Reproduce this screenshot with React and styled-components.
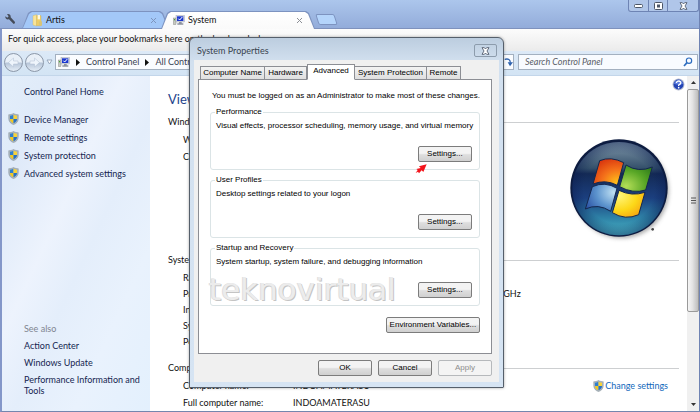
import React from "react";
import styled, { createGlobalStyle, css } from "styled-components";

const GlobalStyle = createGlobalStyle`
  * { box-sizing: border-box; }
  html, body { margin: 0; padding: 0; }
  body { font-family: Lato, "Open Sans", sans-serif; font-size: 9px; line-height: 12px; color: #111; overflow: hidden; }
  button, input { font: inherit; color: inherit; margin: 0; padding: 0; border: 0; background: none; }
  a { text-decoration: none; color: inherit; }
  svg { display: block; flex: none; }
`;

const BrowserWindow = styled.div`
  position: relative;
  display: flex;
  flex-direction: column;
  height: 100vh;
  background: #7f93c4;
  border-left: 2px solid #8497c9;
  border-right: 1px solid #6f83b3;
  border-bottom: 1px solid #7486ae;
`;

/* ---------- browser chrome ---------- */
const TitleBar = styled.header`
  display: flex;
  align-items: flex-end;
  height: 29px;
  padding-left: 4px;
  margin-left: -2px;
  background: linear-gradient(#acc6ec, #93acda);
  border-bottom: 1px solid #7f92bd;
`;
const WrenchButton = styled.button`
  width: 14px;
  height: 18px;
  margin-right: 4px;
`;
const TabStrip = styled.nav`
  display: flex;
  align-items: flex-end;
  flex: 1;
  margin-bottom: -1px;
`;
const BrowserTab = styled.div`
  position: relative;
  z-index: ${(p) => (p.$active ? 2 : 1)};
  display: flex;
  align-items: center;
  width: ${(p) => (p.$active ? "154px" : "147px")};
  height: 18px;
  margin-left: ${(p) => (p.$active ? "-8px" : "0")};
  padding: 0 10px 0 ${(p) => (p.$active ? "12px" : "10px")};
  &::before, &::after {
    content: "";
    position: absolute;
    z-index: -1;
    inset: 0;
    background: #7d93c0;
    clip-path: polygon(0 100%, 6px 2px, 9px 0, calc(100% - 9px) 0, calc(100% - 6px) 2px, 100% 100%);
  }
  &::after {
    inset: 1px 1px ${(p) => (p.$active ? "0" : "1px")};
    background: ${(p) => (p.$active ? "linear-gradient(#fff, #fafafa)" : "#a3c8f8")};
  }
`;
const TabLabel = styled.button`
  display: flex;
  align-items: center;
  gap: 3px;
  flex: 1;
  color: #111;
`;
const TabClose = styled.button`
  width: 9px;
  height: 9px;
`;
const NewTab = styled.button`
  width: 19px;
  height: 11px;
  margin: 0 0 4px 2px;
  border: 1px solid #7d93c0;
  border-radius: 2px;
  background: #b4d4fb;
  transform: skewX(18deg);
`;
const WindowControls = styled.div`
  display: grid;
  grid-template-columns: 19px 19px 31px;
  align-self: flex-start;
  height: 12px;
  border: 1px solid #6e84b4;
  border-top: 0;
  border-radius: 0 0 3px 3px;
  background: #b0c6e9;
`;
const ControlButton = styled.button`
  display: grid;
  place-items: center;
  & + & { border-left: 1px solid #6e84b4; }
`;
const BookmarkBar = styled.div`
  flex: none;
  height: 22px;
  padding: 4px 6px;
  background: linear-gradient(#fcfcfc, #ebebeb);
`;
const AddressRow = styled.div`
  display: flex;
  align-items: center;
  flex: none;
  gap: 2px;
  height: 25px;
  padding: 0 1px 2px 2px;
  background: linear-gradient(#dce9f7, #d3e4f4);
  border-bottom: 1px solid #c3d6ea;
`;
const RoundButton = styled.button`
  width: 19px;
  height: 19px;
  border: 1px solid #8b97a8;
  border-radius: 50%;
  background: linear-gradient(#e9f0f8 48%, #b6c5d8 52%, #e3ecf6);
  display: grid;
  place-items: center;
`;
const AddressBox = styled.div`
  display: flex;
  align-items: center;
  flex: 1;
  gap: 6px;
  height: 16px;
  margin: 0 2px 0 0;
  padding-left: 2px;
  border: 1px solid #a3b0c0;
  background: #fafcff;
  color: #3a4252;
`;
const Spacer = styled.span`flex: 1;`;
const SearchBox = styled.label`
  display: flex;
  align-items: center;
  width: 180px;
  height: 16px;
  padding: 0 4px 0 6px;
  border: 1px solid #a3b0c0;
  background: #f8fbff;
`;
const SearchInput = styled.input`
  flex: 1;
  min-width: 0;
  outline: 0;
  &::placeholder { color: #5b5f68; font-style: italic; opacity: 1; }
`;

/* ---------- control panel ---------- */
const Panel = styled.main`
  display: grid;
  grid-template-columns: 148px 1fr 12px;
  flex: 1;
  min-height: 0;
  background: #fff;
`;
const Sidebar = styled.aside`
  display: flex;
  flex-direction: column;
  justify-content: space-between;
  padding: 10px 6px 15px;
  background: linear-gradient(115deg, #e3eefa 0%, #dfeaf9 18%, #edf3fd 40%, #e4eefb 55%, #e9f2fd 75%, #e3f0fd 100%);
  color: #151f50;
`;
const LinkList = styled.ul`
  display: grid;
  gap: ${(p) => p.$gap};
  list-style: none;
  margin: 0;
  padding: 0;
`;
const HomeLink = styled.a`
  display: block;
  margin: 0 0 15px 16px;
`;
const SideLink = styled.a`
  display: flex;
  align-items: center;
  gap: 5px;
  line-height: 11px;
`;
const SeeAlso = styled.section`margin: 0 -2px 0 16px;`;
const Muted = styled.div`
  margin-bottom: 5px;
  color: #7f8590;
`;
const Content = styled.article`
  overflow: hidden;
  padding: 0 8px 0 18px;
`;
const HelpRow = styled.div`
  display: flex;
  justify-content: flex-end;
  height: 15px;
  margin-right: -6px;
  padding-top: 2px;
`;
const PageTitle = styled.h1`
  margin: 0 0 9px;
  font-size: 13px;
  line-height: 16px;
  font-weight: 400;
  color: #23438c;
`;
const SectionTitle = styled.h2`
  display: flex;
  align-items: center;
  gap: 6px;
  margin: 0;
  font-size: 9px;
  font-weight: 400;
  &::after { content: ""; flex: 1; border-top: 1px solid #cdcfd1; }
`;
const Section = styled.section`
  display: flex;
  justify-content: space-between;
  height: ${(p) => p.$height};
  padding-left: 15px;
`;
const Specs = styled.dl`
  display: grid;
  grid-template-columns: 110px auto;
  align-content: start;
  row-gap: ${(p) => p.$gap || "5px"};
  margin: 6px 0 0;
  white-space: nowrap;
  dt, dd { margin: 0; }
`;
const Lines = styled.div`
  display: grid;
  align-content: start;
  gap: 5px;
  padding-top: 6px;
`;
const LogoSlot = styled.div`padding: 10px 6px 0 0;`;
const ChangeLink = styled.a`
  display: flex;
  align-items: center;
  align-self: flex-start;
  gap: 1px;
  margin: 6px 11px 0 0;
  color: #1168bb;
`;
const ScrollBar = styled.div`
  display: grid;
  grid-template-rows: 13px 223px 1fr 13px;
  background: #f0f0f0;
`;
const ScrollButton = styled.button`
  display: grid;
  place-items: center;
`;
const Thumb = styled.div`
  display: grid;
  place-items: center;
  border: 1px solid #9a9a9a;
  border-radius: 2px;
  background: linear-gradient(90deg, #f6f6f6, #e3e3e3 45%, #bdbdbd);
`;
const ScrollTrack = styled.div``;

/* ---------- dialog ---------- */
const dialogFont = css`
  font-family: "Liberation Sans", Arial, sans-serif;
  font-size: 8px;
  line-height: 12px;
  color: #000;
`;
const Dialog = styled.section`
  position: absolute;
  z-index: 10;
  top: 37px;
  left: 187px;
  width: 315px;
  padding: 0 4px 5px;
  border: 1px solid #555f6b;
  border-radius: 6px 6px 1px 1px;
  background: linear-gradient(#bccddf, #d2e0ef 24px, #d6e4f3);
  box-shadow: 0 0 3px rgba(0, 0, 0, 0.35);
`;
const DialogTitle = styled.div`
  display: flex;
  align-items: center;
  justify-content: space-between;
  height: 22px;
  padding: 3px 2px 0 3px;
  color: #39434f;
`;
const DialogClose = styled.button`
  display: grid;
  place-items: center;
  width: 23px;
  height: 13px;
  border: 1px solid #8d9cac;
  border-radius: 2px;
`;
const DialogBody = styled.div`
  ${dialogFont}
  padding: 4px 7px 6px 4px;
  background: #f0f0f0;
`;
const TabList = styled.div`
  display: grid;
  grid-template-columns: 65px 42px 48px 72px 34px;
  align-items: end;
  margin-bottom: -1px;
  padding-left: 2px;
`;
const DialogTab = styled.button`
  height: ${(p) => (p.$active ? "16px" : "14px")};
  padding-bottom: ${(p) => (p.$active ? "2px" : "0")};
  border: 1px solid #8c8e94;
  border-left-width: ${(p) => (p.$first || p.$active ? "1px" : "0")};
  border-bottom-color: ${(p) => (p.$active ? "#fff" : "#8c8e94")};
  background: ${(p) => (p.$active ? "#fff" : "linear-gradient(#f3f3f3, #dfdfdf)")};
  white-space: nowrap;
`;
const TabPanel = styled.div`
  display: grid;
  gap: 4px;
  padding: 10px 12px 20px 11px;
  border: 1px solid #8c8e94;
  background: #fff;
`;
const Intro = styled.p`
  margin: 0 0 0 2px;
  white-space: nowrap;
`;
const Group = styled.fieldset`
  display: flex;
  flex-direction: column;
  justify-content: space-between;
  height: 64px;
  margin: 0;
  padding: 2px 7px 7px 4px;
  border: 1px solid #dbe4e6;
  border-radius: 3px;
  min-width: 0;
`;
const Legend = styled.legend`padding: 0 1px;`;
const GroupText = styled.p`
  margin: 0 0 0 1px;
  white-space: nowrap;
`;
const PushButton = styled.button`
  align-self: flex-end;
  justify-self: end;
  width: ${(p) => p.$width || "54px"};
  height: 16px;
  border: 1px solid ${(p) => (p.disabled ? "#b6b9bc" : "#7c7c7c")};
  border-radius: 2px;
  background: ${(p) => (p.disabled ? "#f4f4f4" : "linear-gradient(#f3f3f3 45%, #dedede 55%, #d0d0d0)")};
  color: ${(p) => (p.disabled ? "#8d8d8d" : "#000")};
  white-space: nowrap;
`;
const EnvironmentRow = styled.div`
  display: flex;
  justify-content: flex-end;
  padding-top: 7px;
`;
const Footer = styled.div`
  display: flex;
  justify-content: flex-end;
  gap: 6px;
  margin-top: 6px;
`;
const Watermark = styled.div`
  position: absolute;
  top: 234px;
  left: 19px;
  font-family: "DejaVu Sans", sans-serif;
  font-size: 31px;
  line-height: 34px;
  color: #ececec;
  text-shadow: 1px 1px 0 #c4c4c4, -1px 0 0 #dedede;
  pointer-events: none;
`;
const Pointer = styled.svg`
  position: absolute;
  top: 126px;
  left: 225px;
`;

/* ---------- icons ---------- */
const Shield = () => (
  <svg width="11" height="12" viewBox="0 0 33 36">
    <path d="M16.500 1C12 4 7 5 2 5V17C2 26 8 32 16.500 35C25 32 31 26 31 17V5C26 5 21 4 16.500 1Z" fill="#a9b4bd" stroke="#76828c" strokeWidth="1" />
    <path d="M16.500 5C13 7 9 8 6 8V18H16.500Z" fill="#2e7fd0" />
    <path d="M16.500 5C20 7 24 8 27 8V18H16.500Z" fill="#f8d338" />
    <path d="M6 18H16.500V31C10 28 6 24 6 18Z" fill="#f2c91f" />
    <path d="M27 18H16.500V31C23 28 27 24 27 18Z" fill="#2470c4" />
  </svg>
);
const Computer = () => (
  <svg width="12" height="11" viewBox="0 0 36 33">
    <rect x="1" y="9" width="8" height="20" fill="#c7c9c2" stroke="#6f746d" />
    <rect x="3" y="12" width="3" height="4" fill="#46a838" />
    <rect x="9" y="2" width="25" height="19" fill="#d8dbe2" stroke="#7b8194" />
    <rect x="12" y="4" width="19" height="14" fill="#1c38cf" />
    <path d="M16 11L20 15L28 6" fill="none" stroke="#fff" strokeWidth="3" />
    <path d="M18 21H26V25H31V29H13V25H18Z" fill="#8d929e" />
  </svg>
);
const Folder = () => (
  <svg width="11" height="13" viewBox="0 0 33 39">
    <path d="M3 5L14 2V36L3 33Z" fill="#f8e49a" stroke="#d9b34c" />
    <path d="M14 5H27V35H14Z" fill="#f0cf66" stroke="#d2a93e" />
    <path d="M17 3H24V16H17Z" fill="#fff8dc" />
    <path d="M20 22H30V35H20Z" fill="#d8c478" />
  </svg>
);
const Cross = ({ color = "#8d9096" }) => (
  <svg width="7" height="7" viewBox="0 0 7 7"><path d="M1 1L6 6M6 1L1 6" stroke={color} strokeWidth="1" /></svg>
);
const CloseGlyph = () => (
  <svg width="9" height="8" viewBox="0 0 27 24">
    <path d="M3 2H10L13.500 6L17 2H24L18 12L24 22H17L13.500 18L10 22H3L9 12Z" fill="#fff" stroke="#4c5667" strokeWidth="2.500" />
  </svg>
);
const Triangle = () => (
  <svg width="4" height="7" viewBox="0 0 4 7"><path d="M0 0L4 3.500L0 7Z" fill="#111" /></svg>
);
const ArrowGlyph = ({ flip }) => (
  <svg width="13" height="13" viewBox="0 0 26 26">
    <path d={flip ? "M4 10H13V4L23 13L13 22V16H4Z" : "M22 10H13V4L3 13L13 22V16H22Z"} fill="#eff5fc" stroke="#b1bfd2" />
  </svg>
);
const Wrench = () => (
  <svg width="12" height="12" viewBox="0 0 36 36">
    <path d="M12 3C18 3 21 8 20 13L33 27Q34 32 29 33L15 19C8 21 3 16 4 10L10 14L14 10L9 4Z" fill="#454c59" />
  </svg>
);
const Help = () => (
  <svg width="13" height="13" viewBox="0 0 39 39">
    <circle cx="19.500" cy="19.500" r="18" fill="#b9bfd0" />
    <circle cx="19.500" cy="19.500" r="15" fill="#2344b5" />
    <path d="M6 17A14 14 0 0 1 33 17Q20 23 6 17" fill="#5c7ddd" />
    <path d="M13 15Q14 9 20 9Q27 10 26 15Q25 19 20 21V24" fill="none" stroke="#fff" strokeWidth="4" />
    <circle cx="20" cy="29" r="2.500" fill="#fff" />
  </svg>
);
const Magnifier = () => (
  <svg width="10" height="10" viewBox="0 0 30 30">
    <circle cx="18" cy="11" r="8" fill="none" stroke="#2c6cbf" strokeWidth="3.500" />
    <path d="M12 17L3 27" stroke="#2c6cbf" strokeWidth="5" />
  </svg>
);
const Refresh = () => (
  <svg width="10" height="9" viewBox="0 0 30 27">
    <path d="M5 4Q22 0 22 14" fill="none" stroke="#2e62ae" strokeWidth="4" />
    <path d="M14 13H30L21 25Z" fill="#2e62ae" />
  </svg>
);
const Caret = ({ up }) => (
  <svg width="5" height="3" viewBox="0 0 5 3"><path d={up ? "M0 3L2.500 0L5 3Z" : "M0 0L2.500 3L5 0Z"} fill="#333" /></svg>
);
const WindowsLogo = () => (
  <svg width="104" height="107" viewBox="238 204 312 321">
    <defs>
      <linearGradient id="orb" x1="0" y1="0" x2="0" y2="1">
        <stop offset="0" stopColor="#8299ab" />
        <stop offset="0.280" stopColor="#34506b" />
        <stop offset="0.340" stopColor="#142a55" />
        <stop offset="0.600" stopColor="#1b3f7f" />
        <stop offset="0.820" stopColor="#2f84a8" />
        <stop offset="1" stopColor="#4db9c8" />
      </linearGradient>
      <radialGradient id="edge">
        <stop offset="0.750" stopColor="#0b1f55" stopOpacity="0" />
        <stop offset="1" stopColor="#0b1c50" stopOpacity="0.450" />
      </radialGradient>
      <radialGradient id="red" cx="0.800" cy="0.900" r="1">
        <stop offset="0" stopColor="#ffc21a" /><stop offset="0.500" stopColor="#f4711a" /><stop offset="1" stopColor="#d8330e" />
      </radialGradient>
      <radialGradient id="green" cx="0.200" cy="0.800" r="1">
        <stop offset="0" stopColor="#b3de57" /><stop offset="0.600" stopColor="#58a626" /><stop offset="1" stopColor="#2f7d1b" />
      </radialGradient>
      <radialGradient id="blue" cx="0.900" cy="0.300" r="1.100">
        <stop offset="0" stopColor="#bfe0f3" /><stop offset="0.500" stopColor="#5c93cd" /><stop offset="1" stopColor="#23479d" />
      </radialGradient>
      <radialGradient id="yellow" cx="0.200" cy="0.200" r="1">
        <stop offset="0" stopColor="#fff67c" /><stop offset="0.550" stopColor="#fcd818" /><stop offset="1" stopColor="#f49b10" />
      </radialGradient>
      <filter id="soft" x="-20%" y="-20%" width="140%" height="140%"><feGaussianBlur stdDeviation="6" /></filter>
    </defs>
    <circle cx="395" cy="362" r="142" fill="#555" opacity="0.500" filter="url(#soft)" />
    <circle cx="388" cy="354" r="146" fill="#0d1c40" />
    <circle cx="388" cy="356" r="140" fill="url(#orb)" />
    <circle cx="388" cy="356" r="141" fill="url(#edge)" />
    <path d="M330 272Q364 258 402 278L383 346Q348 327 310 342Z" fill="url(#red)" stroke="#14274e" strokeWidth="3" />
    <path d="M409 285Q446 309 488 291L468 360Q430 372 390 350Z" fill="url(#green)" stroke="#14274e" strokeWidth="3" />
    <path d="M308 350Q346 333 382 355L363 424Q326 399 287 417Z" fill="url(#blue)" stroke="#14274e" strokeWidth="3" />
    <path d="M388 361Q426 380 466 367L447 434Q407 452 368 428Z" fill="url(#yellow)" stroke="#14274e" strokeWidth="3" />
    <circle cx="489" cy="478" r="4" fill="#444" />
  </svg>
);

const groups = [
  { title: "Performance", text: "Visual effects, processor scheduling, memory usage, and virtual memory" },
  { title: "User Profiles", text: "Desktop settings related to your logon" },
  { title: "Startup and Recovery", text: "System startup, system failure, and debugging information" },
];
const dialogTabs = ["Computer Name", "Hardware", "Advanced", "System Protection", "Remote"];
const tasks = ["Device Manager", "Remote settings", "System protection", "Advanced system settings"];
const related = ["Action Center", "Windows Update", "Performance Information and Tools"];
const systemSpecs = [
  ["Rating:", "System rating is not available"],
  ["Processor:", "Intel(R) Core(TM)2 Duo CPU  T6600  @ 2.20GHz  2.20 GHz"],
  ["Installed memory (RAM):", "2.00 GB"],
  ["System type:", "32-bit Operating System"],
  ["Pen and Touch:", "No Pen or Touch Input is available"],
];

function SystemDialog() {
  return (
    <Dialog role="dialog" aria-label="System Properties">
      <DialogTitle>
        <span>System Properties</span>
        <DialogClose aria-label="Close dialog"><CloseGlyph /></DialogClose>
      </DialogTitle>
      <DialogBody>
        <TabList role="tablist">
          {dialogTabs.map((name, i) => (
            <DialogTab key={name} role="tab" aria-selected={i === 2} $active={i === 2} $first={i === 0}>{name}</DialogTab>
          ))}
        </TabList>
        <TabPanel role="tabpanel">
          <Intro>You must be logged on as an Administrator to make most of these changes.</Intro>
          {groups.map((g) => (
            <Group key={g.title}>
              <Legend>{g.title}</Legend>
              <GroupText>{g.text}</GroupText>
              <PushButton>Settings...</PushButton>
            </Group>
          ))}
          <EnvironmentRow><PushButton $width="94px">Environment Variables...</PushButton></EnvironmentRow>
        </TabPanel>
        <Footer>
          <PushButton>OK</PushButton>
          <PushButton>Cancel</PushButton>
          <PushButton disabled>Apply</PushButton>
        </Footer>
      </DialogBody>
      <Watermark>teknovirtual</Watermark>
      <Pointer width="12" height="10" viewBox="0 0 36 30">
        <path d="M35 1L25 24L20 19L12 28L9 23L2 27L8 18L4 15L17 12L12 7Z" fill="#f3141b" />
      </Pointer>
    </Dialog>
  );
}

export default function App() {
  return (
    <BrowserWindow>
      <GlobalStyle />
      <TitleBar>
        <WrenchButton aria-label="Browser settings"><Wrench /></WrenchButton>
        <TabStrip>
          <BrowserTab>
            <TabLabel><Folder />Artis</TabLabel>
            <TabClose aria-label="Close Artis"><Cross color="#7d95bd" /></TabClose>
          </BrowserTab>
          <BrowserTab $active>
            <TabLabel><Computer />System</TabLabel>
            <TabClose aria-label="Close System"><Cross /></TabClose>
          </BrowserTab>
          <NewTab aria-label="New tab" />
        </TabStrip>
        <WindowControls>
          <ControlButton aria-label="Minimize">
            <svg width="9" height="4" viewBox="0 0 9 4"><rect x="0.500" y="0.500" width="8" height="3" rx="1" fill="#fff" stroke="#4c5667" /></svg>
          </ControlButton>
          <ControlButton aria-label="Maximize">
            <svg width="9" height="8" viewBox="0 0 9 8"><rect x="0.500" y="0.500" width="8" height="7" rx="1" fill="#fff" stroke="#4c5667" /><rect x="3.500" y="3" width="2" height="2" fill="#b0c6e9" stroke="#4c5667" /></svg>
          </ControlButton>
          <ControlButton aria-label="Close"><CloseGlyph /></ControlButton>
        </WindowControls>
      </TitleBar>
      <BookmarkBar>For quick access, place your bookmarks here on the bookmarks bar.</BookmarkBar>
      <AddressRow>
        <RoundButton aria-label="Back"><ArrowGlyph /></RoundButton>
        <RoundButton aria-label="Forward"><ArrowGlyph flip /></RoundButton>
        <svg width="7" height="6" viewBox="0 0 7 6"><path d="M1 1H6L3.500 5Z" fill="#fff" stroke="#98a8bd" /></svg>
        <AddressBox>
          <Computer /><Triangle />
          <a href="#control-panel">Control Panel</a><Triangle />
          <a href="#all-items">All Control Panel Items</a>
          <Spacer /><Refresh />
        </AddressBox>
        <SearchBox>
          <SearchInput type="text" placeholder="Search Control Panel" aria-label="Search Control Panel" />
          <Magnifier />
        </SearchBox>
      </AddressRow>
      <Panel>
        <Sidebar>
          <nav>
            <HomeLink href="#home">Control Panel Home</HomeLink>
            <LinkList $gap="6px">
              {tasks.map((t) => <li key={t}><SideLink href="#task"><Shield />{t}</SideLink></li>)}
            </LinkList>
          </nav>
          <SeeAlso>
            <Muted>See also</Muted>
            <LinkList $gap="6px">
              {related.map((t) => <li key={t}><SideLink href="#related">{t}</SideLink></li>)}
            </LinkList>
          </SeeAlso>
        </Sidebar>
        <Content>
          <HelpRow><button aria-label="Help"><Help /></button></HelpRow>
          <PageTitle>View basic information about your computer</PageTitle>
          <SectionTitle>Windows edition</SectionTitle>
          <Section $height="126px">
            <Lines>
              <span>Windows 7 Ultimate</span>
              <span>Copyright © 2009 Microsoft Corporation.</span>
            </Lines>
            <LogoSlot><WindowsLogo /></LogoSlot>
          </Section>
          <SectionTitle>System</SectionTitle>
          <Section $height="96px">
            <Specs $gap="4px">
              {systemSpecs.map(([k, v]) => <React.Fragment key={k}><dt>{k}</dt><dd>{v}</dd></React.Fragment>)}
            </Specs>
          </Section>
          <SectionTitle>Computer name, domain, and workgroup settings</SectionTitle>
          <Section $height="40px">
            <Specs>
              <dt>Computer name:</dt><dd>INDOAMATERASU</dd>
              <dt>Full computer name:</dt><dd>INDOAMATERASU</dd>
            </Specs>
            <ChangeLink href="#change"><Shield />Change settings</ChangeLink>
          </Section>
        </Content>
        <ScrollBar>
          <ScrollButton aria-label="Scroll up"><Caret up /></ScrollButton>
          <Thumb><svg width="5" height="7" viewBox="0 0 5 7"><path d="M0 1H5M0 3.500H5M0 6H5" stroke="#555" /></svg></Thumb>
          <ScrollTrack />
          <ScrollButton aria-label="Scroll down"><Caret /></ScrollButton>
        </ScrollBar>
      </Panel>
      <SystemDialog />
    </BrowserWindow>
  );
}
